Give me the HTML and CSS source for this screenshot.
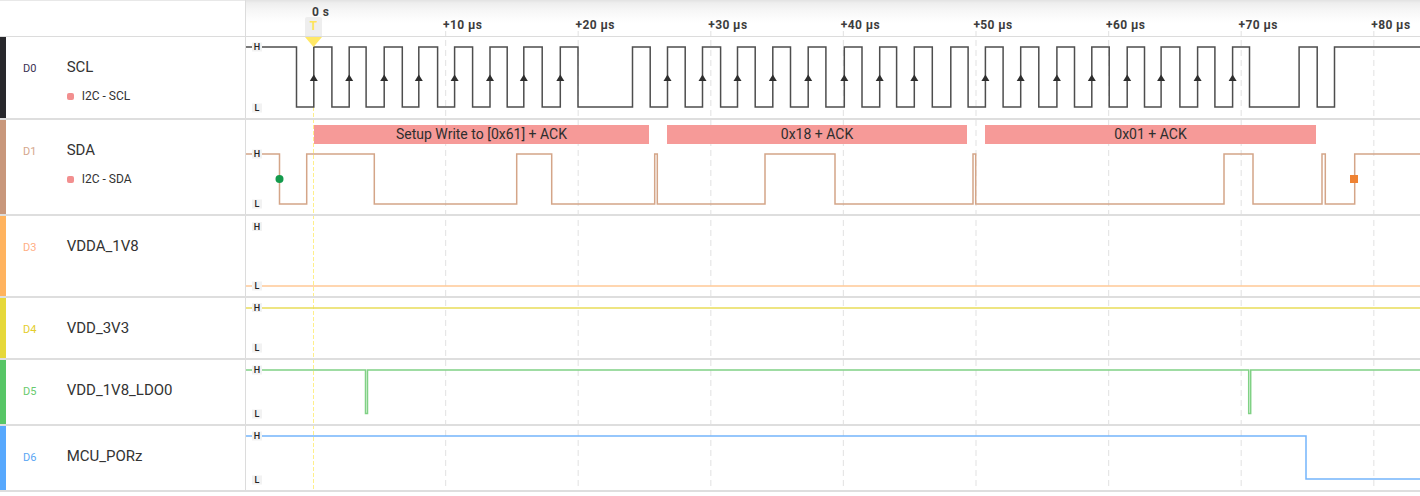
FILE: index.html
```html
<!DOCTYPE html>
<html>
<head>
<meta charset="utf-8">
<link rel="stylesheet" href="styles.css">
</head>
<body>
<div class="app">
  <div class="header">
    <div class="header-left"></div>
    <div class="header-right">
      <svg class="axis" width="1174" height="36" viewBox="246 0 1174 36">
        <defs>
          <g id="grid" class="grid">
            <line x1="445.6" y1="0" x2="445.6" y2="500"/>
            <line x1="578.2" y1="0" x2="578.2" y2="500"/>
            <line x1="710.8" y1="0" x2="710.8" y2="500"/>
            <line x1="843.4" y1="0" x2="843.4" y2="500"/>
            <line x1="976" y1="0" x2="976" y2="500"/>
            <line x1="1108.6" y1="0" x2="1108.6" y2="500"/>
            <line x1="1241.2" y1="0" x2="1241.2" y2="500"/>
            <line x1="1373.8" y1="0" x2="1373.8" y2="500"/>
          </g>
          <line id="trig" class="trig-line" x1="313.5" y1="47" x2="313.5" y2="500"/>
        </defs>
        <g class="grid">
          <line x1="445.6" y1="31" x2="445.6" y2="36"/>
          <line x1="578.2" y1="31" x2="578.2" y2="36"/>
          <line x1="710.8" y1="31" x2="710.8" y2="36"/>
          <line x1="843.4" y1="31" x2="843.4" y2="36"/>
          <line x1="976" y1="31" x2="976" y2="36"/>
          <line x1="1108.6" y1="31" x2="1108.6" y2="36"/>
          <line x1="1241.2" y1="31" x2="1241.2" y2="36"/>
          <line x1="1373.8" y1="31" x2="1373.8" y2="36"/>
        </g>
        <text class="tick" x="312" y="15.5">0 s</text>
        <text class="tick" x="443" y="29">+10 μs</text>
        <text class="tick" x="575.6" y="29">+20 μs</text>
        <text class="tick" x="708.2" y="29">+30 μs</text>
        <text class="tick" x="840.8" y="29">+40 μs</text>
        <text class="tick" x="973.4" y="29">+50 μs</text>
        <text class="tick" x="1106" y="29">+60 μs</text>
        <text class="tick" x="1238.6" y="29">+70 μs</text>
        <text class="tick" x="1371.2" y="29">+80 μs</text>
        <path class="trig-box" d="M305 36 V19 Q305 17 307 17 H320 Q322 17 322 19 V36 Z"/>
        <text class="trig-t" x="313.5" y="29.5" text-anchor="middle">T</text>
      </svg>
    </div>
  </div>

  <div class="row r0">
    <div class="label-panel">
      <div class="bar"></div>
      <div class="label">
        <div class="title-line"><span class="ch">D0</span><span class="name">SCL</span></div>
        <div class="sub"><span class="dot"></span>I2C - SCL</div>
      </div>
    </div>
    <div class="wave">
      <svg width="1174" height="81" viewBox="246 37 1174 81">
        <use href="#grid"/>
        <use href="#trig"/>
        <path class="sig scl" d="M246 47 H296.5 V107 H313.8 V47 H331.9 V107 H349.2 V47 H366.1 V107 H384.2 V47 H402.3 V107 H418.8 V47 H437.6 V107 H454.6 V47 H472.6 V107 H490 V47 H507.2 V107 H523.8 V47 H542.2 V107 H560.3 V47 H578 V107 H632.5 V47 H650.2 V107 H667.5 V47 H685.2 V107 H702.5 V47 H720.6 V107 H737.5 V47 H755.2 V107 H772.8 V47 H790.5 V107 H808.2 V47 H825.9 V107 H844.3 V47 H862 V107 H879.7 V47 H896.6 V107 H914.3 V47 H932.3 V107 H950.8 V47 H968.1 V107 H985.4 V47 H1003.1 V107 H1020.7 V47 H1038.8 V107 H1056.9 V47 H1074.5 V107 H1091.8 V47 H1109.2 V107 H1127.2 V47 H1144.5 V107 H1161.1 V47 H1179.9 V107 H1197.6 V47 H1214.9 V107 H1232.6 V47 H1249.5 V107 H1299.1 V47 H1317.2 V107 H1334.5 V47 H1420"/>
        <g class="arrows">
          <polygon points="309.8,81 317.8,81 313.8,74.5"/>
          <polygon points="345.2,81 353.2,81 349.2,74.5"/>
          <polygon points="380.2,81 388.2,81 384.2,74.5"/>
          <polygon points="414.8,81 422.8,81 418.8,74.5"/>
          <polygon points="450.6,81 458.6,81 454.6,74.5"/>
          <polygon points="486,81 494,81 490,74.5"/>
          <polygon points="519.8,81 527.8,81 523.8,74.5"/>
          <polygon points="556.3,81 564.3,81 560.3,74.5"/>
          <polygon points="663.5,81 671.5,81 667.5,74.5"/>
          <polygon points="698.5,81 706.5,81 702.5,74.5"/>
          <polygon points="733.5,81 741.5,81 737.5,74.5"/>
          <polygon points="768.8,81 776.8,81 772.8,74.5"/>
          <polygon points="804.2,81 812.2,81 808.2,74.5"/>
          <polygon points="840.3,81 848.3,81 844.3,74.5"/>
          <polygon points="875.7,81 883.7,81 879.7,74.5"/>
          <polygon points="910.3,81 918.3,81 914.3,74.5"/>
          <polygon points="981.4,81 989.4,81 985.4,74.5"/>
          <polygon points="1016.7,81 1024.7,81 1020.7,74.5"/>
          <polygon points="1052.9,81 1060.9,81 1056.9,74.5"/>
          <polygon points="1087.8,81 1095.8,81 1091.8,74.5"/>
          <polygon points="1123.2,81 1131.2,81 1127.2,74.5"/>
          <polygon points="1157.1,81 1165.1,81 1161.1,74.5"/>
          <polygon points="1193.6,81 1201.6,81 1197.6,74.5"/>
          <polygon points="1228.6,81 1236.6,81 1232.6,74.5"/>
        </g>
        <polygon class="trig-tri" points="305,37 322,37 313.5,47"/>
        <rect class="hl-bg" x="252" y="42.5" width="10" height="9"/>
        <text class="hl" x="257" y="50.3">H</text>
        <rect class="hl-bg" x="252" y="103.5" width="10" height="9"/>
        <text class="hl" x="257" y="111.3">L</text>
      </svg>
    </div>
  </div>

  <div class="row r1">
    <div class="label-panel">
      <div class="bar"></div>
      <div class="label">
        <div class="title-line"><span class="ch">D1</span><span class="name">SDA</span></div>
        <div class="sub"><span class="dot"></span>I2C - SDA</div>
      </div>
    </div>
    <div class="wave">
      <svg width="1174" height="94" viewBox="246 120 1174 94">
        <use href="#grid"/>
        <use href="#trig"/>
        <rect class="ann" x="314" y="125" width="335" height="19"/>
        <rect class="ann" x="667" y="125" width="300" height="19"/>
        <rect class="ann" x="985" y="125" width="331" height="19"/>
        <text class="ann-t" x="481.5" y="139.3" text-anchor="middle">Setup Write to [0x61] + ACK</text>
        <text class="ann-t" x="817" y="139.3" text-anchor="middle">0x18 + ACK</text>
        <text class="ann-t" x="1150.5" y="139.3" text-anchor="middle">0x01 + ACK</text>
        <path class="sig sda" d="M246 154 H279.5 V204 H306.7 V154 H374.3 V204 H516.7 V154 H551.7 V204 H654.7 V154 H657.3 V204 H765 V154 H835 V204 H973 V154 H975.7 V204 H1224 V154 H1253 V204 H1322 V154 H1325.3 V204 H1354.7 V154 H1420"/>
        <circle class="start" cx="279.5" cy="179" r="4"/>
        <rect class="stop" x="1350" y="175" width="8" height="8"/>
        <rect class="hl-bg" x="252" y="149.5" width="10" height="9"/>
        <text class="hl" x="257" y="157.3">H</text>
        <rect class="hl-bg" x="252" y="199.5" width="10" height="9"/>
        <text class="hl" x="257" y="207.3">L</text>
      </svg>
    </div>
  </div>

  <div class="row r3">
    <div class="label-panel">
      <div class="bar"></div>
      <div class="label">
        <div class="title-line"><span class="ch">D3</span><span class="name">VDDA_1V8</span></div>
      </div>
    </div>
    <div class="wave">
      <svg width="1174" height="80" viewBox="246 216 1174 80">
        <use href="#grid"/>
        <use href="#trig"/>
        <path class="sig d3" d="M246 286 H1420"/>
        <rect class="hl-bg" x="252" y="222" width="10" height="9"/>
        <text class="hl" x="257" y="229.8">H</text>
        <rect class="hl-bg" x="252" y="281.5" width="10" height="9"/>
        <text class="hl" x="257" y="289.3">L</text>
      </svg>
    </div>
  </div>

  <div class="row r4">
    <div class="label-panel">
      <div class="bar"></div>
      <div class="label">
        <div class="title-line"><span class="ch">D4</span><span class="name">VDD_3V3</span></div>
      </div>
    </div>
    <div class="wave">
      <svg width="1174" height="60" viewBox="246 298 1174 60">
        <use href="#grid"/>
        <use href="#trig"/>
        <path class="sig d4" d="M246 308 H1420"/>
        <rect class="hl-bg" x="252" y="303" width="10" height="9"/>
        <text class="hl" x="257" y="310.8">H</text>
        <rect class="hl-bg" x="252" y="343.5" width="10" height="9"/>
        <text class="hl" x="257" y="351.3">L</text>
      </svg>
    </div>
  </div>

  <div class="row r5">
    <div class="label-panel">
      <div class="bar"></div>
      <div class="label">
        <div class="title-line"><span class="ch">D5</span><span class="name">VDD_1V8_LDO0</span></div>
      </div>
    </div>
    <div class="wave">
      <svg width="1174" height="64" viewBox="246 360 1174 64">
        <use href="#grid"/>
        <use href="#trig"/>
        <path class="sig d5" d="M246 370 H365.5 V413.5 H367.5 V370 H1248.7 V413.5 H1250.7 V370 H1420"/>
        <rect class="hl-bg" x="252" y="365.5" width="10" height="9"/>
        <text class="hl" x="257" y="373.3">H</text>
        <rect class="hl-bg" x="252" y="409.5" width="10" height="9"/>
        <text class="hl" x="257" y="417.3">L</text>
      </svg>
    </div>
  </div>

  <div class="row r6">
    <div class="label-panel">
      <div class="bar"></div>
      <div class="label">
        <div class="title-line"><span class="ch">D6</span><span class="name">MCU_PORz</span></div>
      </div>
    </div>
    <div class="wave">
      <svg width="1174" height="64" viewBox="246 426 1174 64">
        <use href="#grid"/>
        <use href="#trig"/>
        <path class="sig d6" d="M246 436 H1306 V479 H1420"/>
        <rect class="hl-bg" x="252" y="431.5" width="10" height="9"/>
        <text class="hl" x="257" y="439.3">H</text>
        <rect class="hl-bg" x="252" y="475.5" width="10" height="9"/>
        <text class="hl" x="257" y="483.3">L</text>
      </svg>
    </div>
  </div>
</div>
</body>
</html>
```
FILE: styles.css
```css
html, body {
  margin: 0;
  padding: 0;
  background: #fff;
}
body {
  font-family: Roboto, "Liberation Sans", Arial, sans-serif;
  color: #333;
}
.app {
  width: 1420px;
}
.header {
  display: flex;
  height: 36px;
  border-bottom: 1px solid #dcdcdc;
}
.header-left {
  width: 245px;
  flex: none;
  border-right: 1px solid #dcdcdc;
  background: linear-gradient(#e8e8e8 0, #e8e8e8 1px, #fff 1px);
}
.header-right {
  flex: 1;
  background: linear-gradient(#e2e2e2 0, #eeeeee 3px, #f6f6f6 10px, #fcfcfc 18px, #fff 24px);
}
.header-right svg,
.wave svg {
  display: block;
}
.row {
  display: flex;
  border-bottom: 2px solid #dedede;
}
.r0 { height: 81px; }
.r1 { height: 94px; }
.r3 { height: 80px; }
.r4 { height: 60px; }
.r5 { height: 64px; }
.r6 { height: 64px; }

.label-panel {
  width: 245px;
  flex: none;
  display: flex;
  border-right: 1px solid #dcdcdc;
}
.bar {
  width: 6px;
  flex: none;
}
.label {
  padding: 20px 0 0 17px;
}
.title-line {
  display: flex;
  align-items: baseline;
  height: 20px;
  line-height: 20px;
}
.ch {
  width: 43.7px;
  font-size: 11px;
}
.name {
  font-size: 15px;
  color: #333;
}
.sub {
  display: flex;
  align-items: center;
  margin: 12px 0 0 43.7px;
  font-size: 12px;
  line-height: 14px;
  color: #333;
}
.dot {
  width: 7px;
  height: 7px;
  border-radius: 2px;
  background: #f28f8f;
  margin-right: 8px;
}

.r0 .bar { background: #28282c; }
.r1 .bar { background: #c8977b; }
.r3 .bar { background: #ffb35e; }
.r4 .bar { background: #e6d83a; }
.r5 .bar { background: #57c666; }
.r6 .bar { background: #57a8fd; }

.r0 .ch { color: #3a3052; }
.r1 .ch { color: #d5a68d; }
.r3 .ch { color: #ffae85; }
.r4 .ch { color: #e4cd2c; }
.r5 .ch { color: #68ca6e; }
.r6 .ch { color: #5aa6f4; }

.wave {
  flex: 1;
}

/* svg drawing */
.grid line {
  stroke: #e6e6e6;
  stroke-width: 1.2;
  stroke-dasharray: 6 4;
}
.trig-line {
  stroke: #ffef8a;
  stroke-width: 1;
  stroke-dasharray: 4 2;
}
.tick {
  font-family: Roboto, "Liberation Sans", sans-serif;
  font-weight: 700;
  font-size: 12px;
  letter-spacing: 0.4px;
  fill: #3d3d3d;
}
.trig-box {
  fill: #eeeeee;
}
.trig-t {
  font-family: Roboto, "Liberation Sans", sans-serif;
  font-weight: 700;
  font-size: 12px;
  fill: #ffe35a;
}
.trig-tri {
  fill: #ffe866;
}
.sig {
  fill: none;
  stroke-width: 1.5;
  stroke-linejoin: miter;
}
.scl { stroke: #4e4e4e; }
.sda { stroke: #d4a588; }
.d3 { stroke: #ffc996; }
.d4 { stroke: #e8dc58; }
.d5 { stroke: #80d185; }
.d6 { stroke: #74b5fb; }
.arrows polygon {
  fill: #2e2e2e;
}
.hl-bg {
  fill: #f2f2f2;
}
.hl {
  font-family: Roboto, "Liberation Sans", sans-serif;
  font-weight: 500;
  font-size: 9px;
  fill: #222;
  text-anchor: middle;
}
.ann {
  fill: #f69a98;
}
.ann-t {
  font-family: Roboto, "Liberation Sans", sans-serif;
  font-size: 14px;
  fill: #2e2e2e;
}
.start {
  fill: #139a4c;
}
.stop {
  fill: #ef8232;
}
```
